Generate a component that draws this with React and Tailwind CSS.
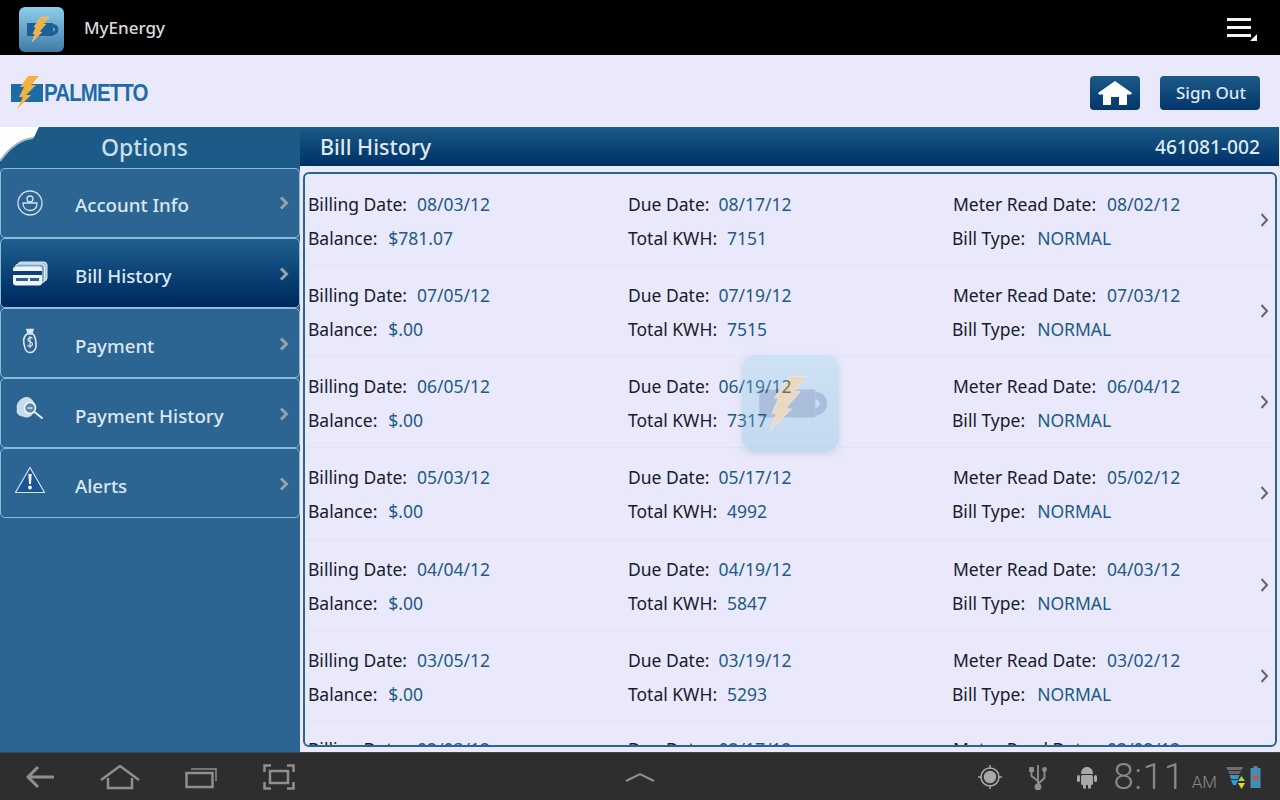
const BILLS = [
  { billing: "08/03/12", due: "08/17/12", read: "08/02/12", balance: "$781.07", kwh: "7151" },
  { billing: "07/05/12", due: "07/19/12", read: "07/03/12", balance: "$.00", kwh: "7515" },
  { billing: "06/05/12", due: "06/19/12", read: "06/04/12", balance: "$.00", kwh: "7317" },
  { billing: "05/03/12", due: "05/17/12", read: "05/02/12", balance: "$.00", kwh: "4992" },
  { billing: "04/04/12", due: "04/19/12", read: "04/03/12", balance: "$.00", kwh: "5847" },
  { billing: "03/05/12", due: "03/19/12", read: "03/02/12", balance: "$.00", kwh: "5293" },
  { billing: "02/03/12", due: "02/17/12", read: "02/02/12", balance: "$.00", kwh: "5120", last: true },
];

function AppIcon({ id = "appbg", top = "#8fcdec", bottom = "#3f7ba6" }) {
  return (
    <svg viewBox="0 0 45 45" className="w-full h-full">
      <defs>
        <linearGradient id={id} x1="0" y1="0" x2="0" y2="1">
          <stop offset="0" stopColor={top} />
          <stop offset="1" stopColor={bottom} />
        </linearGradient>
      </defs>
      <rect width="45" height="45" rx="6" fill={`url(#${id})`} />
      <rect x="8" y="16" width="26" height="13" fill="#1f5f97" />
      <path d="M34 17 a5.5 5.5 0 0 1 0 11 Z M34 20.5 l0 4 a2 2 0 0 0 0 -4" fill="#1f5f97" fillRule="evenodd" />
      <path d="M22 10 L30 10 L24 17 L27 17 L20 25 L23 25 L13 35 L16 27 L14 27 L17 20 L15 20 Z" fill="#f3b23c" stroke="#fbe3a8" strokeWidth="0.4" />
    </svg>
  );
}

function UserIcon() {
  return (
    <svg width="26" height="26" viewBox="0 0 26 26" fill="none" stroke="#cfe3f1" strokeWidth="1.3">
      <circle cx="13" cy="13" r="12" />
      <circle cx="13" cy="9" r="3" />
      <path d="M6 13 H20 C20 18 17 20.5 13 20.5 C9 20.5 6 18 6 13 Z" />
    </svg>
  );
}

function CardsIcon() {
  return (
    <svg width="36" height="26" viewBox="0 0 36 26">
      <rect x="6" y="1" width="29" height="19" rx="3" fill="#a9c6de" stroke="#dfeaf3" />
      <rect x="3.5" y="3" width="29" height="19" rx="3" fill="#7fa6c6" stroke="#e6eff6" />
      <rect x="1" y="5.5" width="29" height="19" rx="3" fill="#eef4f9" />
      <rect x="1" y="10" width="29" height="4" fill="#0f3f73" />
      <rect x="4" y="17" width="12" height="3" fill="#2f5f8c" />
      <rect x="18" y="17" width="9" height="3" fill="#2f5f8c" />
    </svg>
  );
}

function MoneyIcon() {
  return (
    <svg width="16" height="26" viewBox="0 0 16 26" fill="none" stroke="#dbe8f2" strokeWidth="1.6">
      <path d="M5 1.5 H11 L10 5 H6 Z" fill="#dbe8f2" />
      <path d="M5 6 C1 9 1 13 2.5 18 C3 22 5 24.5 8 24.5 C12 24.5 14.5 21 14 16 C13.8 11 13 8 11 6 Z" />
      <path d="M10.5 10.5 C9 8.5 5.5 9.5 6 12 C6.5 14 10.5 13.5 10.5 16 C10.5 18.5 6.5 19 5.5 17 M8 8 V20" strokeWidth="1.2" />
    </svg>
  );
}

function HistoryIcon() {
  return (
    <svg width="28" height="26" viewBox="0 0 28 26">
      <path d="M8 1 C12 -0.5 16 2 17 5 C20 7 20 13 17 16 C15 20 10 21 7 19 C3 19 0 16 1.5 12 C0 8 3 3 8 1 Z" fill="#c9dbea" stroke="#f1f6fa" strokeWidth="0.8" />
      <circle cx="14" cy="11" r="5.5" fill="#5a88ad" stroke="#f4f8fb" strokeWidth="1.5" />
      <path d="M11.5 11 H16.5" stroke="#f4f8fb" strokeWidth="1.2" />
      <path d="M18.5 15 L26 21" stroke="#e6eff6" strokeWidth="2" strokeLinecap="round" />
    </svg>
  );
}

function AlertIcon() {
  return (
    <svg width="32" height="28" viewBox="0 0 32 28">
      <path d="M16 1.5 L30.5 26.5 H1.5 Z" fill="#1b5593" stroke="#d3e4f0" strokeWidth="1.2" strokeLinejoin="round" />
      <path d="M14.3 8 H17.7 L17 18 H15 Z" fill="#f2f6fa" />
      <circle cx="16" cy="21.5" r="1.9" fill="#f2f6fa" />
    </svg>
  );
}

const MENU = [
  { label: "Account Info", icon: <UserIcon />, iconBox: "pl-[16px] pt-[21px]", text: "pt-[22px]", chevron: "top-[27px]" },
  { label: "Bill History", icon: <CardsIcon />, iconBox: "pl-[11px] pt-[22px]", active: true, text: "pt-[23px]", chevron: "top-[28px]" },
  { label: "Payment", icon: <MoneyIcon />, iconBox: "pl-[21px] pt-[19px]", text: "pt-[23px]", chevron: "top-[28px]" },
  { label: "Payment History", icon: <HistoryIcon />, iconBox: "pl-[15px] pt-[18px]", text: "pt-[23px]", chevron: "top-[28px]" },
  { label: "Alerts", icon: <AlertIcon />, iconBox: "pl-[13px] pt-[17px]", text: "pt-[23px]", chevron: "top-[28px]" },
];

function MenuItem({ item }) {
  return (
    <div
      className={`relative h-[70px] w-[300px] rounded-[5px] border border-[#8bbcd9] flex ${
        item.active ? "bg-gradient-to-b from-[#20608f] to-[#00275e]" : "bg-[#2c6591]"
      }`}
    >
      <div className={`w-[74px] shrink-0 ${item.iconBox}`}>{item.icon}</div>
      <div className={`text-[18.7px] font-medium leading-[27px] text-[#dbe8f2] ${item.text}`}>{item.label}</div>
      <svg width="10" height="14" viewBox="0 0 10 14" fill="none" className={`absolute right-[10px] ${item.chevron}`}>
        <path d="M2 1.5 L7.5 7 L2 12.5" stroke="#98a1a7" strokeWidth="3" />
      </svg>
    </div>
  );
}

function Field({ label, value, gap = "ml-[10px]", className = "" }) {
  return (
    <div className={`h-[34px] leading-[34px] whitespace-nowrap ${className}`}>
      <span className="text-[#15202b]">{label}:</span>
      <span className={`${gap} text-[#215a85]`}>{value}</span>
    </div>
  );
}

function BillRow({ bill }) {
  return (
    <div className={`relative h-[91.125px] shrink-0 pt-[12px] border-b border-[#e3e3f5] flex text-[17.5px] ${bill.last ? "-mt-[2px]" : ""}`}>
      <div className="w-[323px] pl-[3px] shrink-0">
        <Field label="Billing Date" value={bill.billing} />
        <Field label="Balance" value={bill.balance} gap="ml-[11px]" />
      </div>
      <div className="w-[324px] shrink-0">
        <Field label="Due Date" value={bill.due} gap="ml-[9px]" />
        <Field label="Total KWH" value={bill.kwh} />
      </div>
      <div>
        <Field label="Meter Read Date" value={bill.read} gap="ml-[11px]" className="pl-px" />
        <Field label="Bill Type" value="NORMAL" gap="ml-[12px]" />
      </div>
      <svg width="9" height="14" viewBox="0 0 9 14" fill="none" className="absolute right-[6px] top-[38px]">
        <path d="M1.5 1 L7 7 L1.5 13" stroke="#5d6770" strokeWidth="2" />
      </svg>
    </div>
  );
}

function SystemBar() {
  const c = "#8f8f8f";
  return (
    <div className="h-[48px] shrink-0 bg-[#2e2e2e] border-t border-[#3f4549] flex items-center relative">
      <div className="flex items-center pl-[25px] w-[625px]">
        <svg width="30" height="26" viewBox="0 0 30 26" fill="none" stroke={c} strokeWidth="3">
          <path d="M29 13 H3 M13 3 L3 13 L13 23" />
        </svg>
        <svg width="40" height="26" viewBox="0 0 40 26" fill="none" stroke={c} strokeWidth="2.5" className="ml-[45px]">
          <path d="M1 16 L20 2 L39 16 M8 14 L8 24 H32 V14" />
        </svg>
        <svg width="32" height="24" viewBox="0 0 32 24" fill="none" stroke={c} strokeWidth="2.5" className="ml-[45px]">
          <rect x="1.5" y="8" width="26" height="14" />
          <path d="M6 4 H31 V16" strokeWidth="1.5" />
        </svg>
        <svg width="32" height="26" viewBox="0 0 32 26" fill="none" stroke={c} strokeWidth="2.5" className="ml-[46px]">
          <path d="M1.5 8 V1.5 H8 M24 1.5 H30.5 V8 M1.5 18 V24.5 H8 M24 24.5 H30.5 V18" />
          <rect x="7" y="7" width="18" height="12" />
        </svg>
      </div>
      <svg width="30" height="10" viewBox="0 0 30 10" fill="none" stroke={c} strokeWidth="2">
        <path d="M1 9 L15 2 L29 9" />
      </svg>
      <div className="ml-auto flex items-center">
        <svg width="26" height="26" viewBox="0 0 26 26" fill="none" stroke="#a8a8a8" strokeWidth="1.5">
          <circle cx="13" cy="13" r="5.5" fill="#a8a8a8" />
          <circle cx="13" cy="13" r="9" />
          <path d="M13 1 V5 M13 21 V25 M1 13 H5 M21 13 H25" />
        </svg>
        <svg width="18" height="26" viewBox="0 0 18 26" fill="none" stroke={c} strokeWidth="1.8" className="ml-[26px]">
          <path d="M9 1 V24 M9 17 L2.5 12 V7 M9 20 L15.5 14 V7" />
          <circle cx="9" cy="23" r="2.5" fill={c} />
          <rect x="1" y="4" width="3" height="3" fill={c} />
          <circle cx="15.5" cy="5.5" r="1.5" fill={c} />
        </svg>
        <svg width="22" height="24" viewBox="0 0 22 24" className="ml-[29px]" fill="#a8a8a8">
          <path d="M5 9 C5 4 8 2 11 2 C14 2 17 4 17 9 Z" />
          <rect x="5" y="10" width="12" height="10" rx="1.5" />
          <rect x="1" y="10" width="3" height="7" rx="1.5" />
          <rect x="18" y="10" width="3" height="7" rx="1.5" />
          <rect x="7" y="20" width="3" height="3.5" />
          <rect x="12" y="20" width="3" height="3.5" />
        </svg>
        <div
          className="ml-[15px] text-[37px] leading-none font-light text-[#8a8a8a] tracking-[0.5px]"
          style={{ fontFamily: "Roboto, 'Noto Sans', sans-serif" }}
        >
          8:11
        </div>
        <div
          className="ml-[7px] mt-[12px] text-[17px] leading-none font-light text-[#8a8a8a]"
          style={{ fontFamily: "Roboto, 'Noto Sans', sans-serif" }}
        >
          AM
        </div>
        <svg width="20" height="26" viewBox="0 0 20 26" className="ml-[9px]">
          <path d="M0 3 H17 L15.5 6 H1.5 Z" fill="#6f6f6f" />
          <path d="M2 7 H15 L13.5 10 H3.5 Z" fill="#7a5d5d" />
          <path d="M3.5 11 H13.5 L12 15 H5 Z" fill="#2e9bd6" />
          <path d="M5 16 H12 L10 21 H7 Z" fill="#2e9bd6" />
          <path d="M15.5 12 L19 17 H12 Z" fill="#a6d63a" />
          <path d="M15.5 25 L19 19 H12 Z" fill="#d8d93a" />
        </svg>
        <svg width="11" height="22" viewBox="0 0 11 22" className="ml-[4px] mr-[19px]">
          <rect x="3.5" y="0" width="4" height="2" fill="#777" />
          <rect x="0.5" y="2" width="10" height="20" fill="#3f8fb8" />
          <path d="M3 9 L8 14 M8 9 L3 14" stroke="#c9504a" strokeWidth="2" />
        </svg>
      </div>
    </div>
  );
}

export default function App() {
  return (
    <div
      className="w-[1280px] h-[800px] overflow-hidden flex flex-col bg-[#e9e9fb]"
      style={{ fontFamily: "'Noto Sans', 'Open Sans', sans-serif" }}
    >
      <header className="h-[55px] shrink-0 bg-black flex items-center pl-[19px] pr-[23px] pt-[4px]">
        <div className="w-[45px] h-[45px]">
          <AppIcon />
        </div>
        <span className="ml-[20px] -mt-[4px] text-[17px] font-medium text-[#dcdcdc]">MyEnergy</span>
        <svg width="30" height="25" viewBox="0 0 30 25" className="ml-auto" fill="#f2f2f2">
          <rect x="0" y="1" width="24" height="3" />
          <rect x="0" y="9" width="24" height="3" />
          <rect x="0" y="17" width="24" height="3" />
          <path d="M30 17 V24 H23 Z" />
        </svg>
      </header>

      <div className="h-[72px] shrink-0 flex items-center pl-[11px] pr-[20px] pt-[4px]">
        <div className="flex items-center relative">
          <svg width="32" height="34" viewBox="0 0 32 34" className="shrink-0">
            <rect x="0" y="8" width="32" height="18" fill="#1d6ca8" />
            <path d="M17 0 L28 0 L20 9 L25 9 L15 19 L20 19 L6 33 L12 21 L8 21 L13 11 L9 11 Z" fill="#f3b23c" />
          </svg>
          <span
            className="ml-[1px] inline-block origin-left scale-x-[0.89] text-[23px] leading-none font-bold text-[#1d6ca8] tracking-[-1px]"
            style={{ fontFamily: "'Liberation Sans', sans-serif" }}
          >
            PALMETTO
          </span>
        </div>
        <button className="ml-auto w-[50px] h-[34px] rounded-[4px] bg-gradient-to-b from-[#1c5a87] to-[#05366c] flex items-center justify-center">
          <svg width="34" height="24" viewBox="0 0 34 24" fill="#ffffff">
            <path d="M17 0 L34 12 L33 13.5 H29 V24 H21 V16 H13 V24 H5 V13.5 H1 L0 12 Z" />
          </svg>
        </button>
        <button className="ml-[20px] w-[100px] h-[34px] pl-[2px] rounded-[4px] bg-gradient-to-b from-[#1c5a87] to-[#05366c] text-[17px] font-medium text-[#dbe8f2]">
          Sign Out
        </button>
      </div>

      <div className="flex-1 min-h-0 flex">
        <aside className="relative w-[300px] shrink-0 bg-[#2c6591] flex flex-col">
          <div className="h-[41px] shrink-0 bg-[#1c5a87] pl-[101px] text-[23px] leading-[41px] font-medium text-[#c9deec]">Options</div>
          <svg width="42" height="38" viewBox="0 0 42 38" className="absolute left-0 top-0">
            <path d="M0 0 H39 C36 5 35 10 33 11 C22 12 10 20 0 34 Z" fill="#ffffff" />
            <path d="M33 11 C22 12 10 20 0 34" fill="none" stroke="#a4b6c4" strokeWidth="2" />
          </svg>
          {MENU.map((item) => (
            <MenuItem key={item.label} item={item} />
          ))}
        </aside>

        <main className="relative flex-1 min-w-0 flex flex-col">
          <div className="h-[39px] mr-px shrink-0 bg-gradient-to-b from-[#1c5a87] to-[#003166] flex items-center justify-between pl-[20px] pr-[19px]">
            <span className="text-[21.5px] font-medium text-[#dfe9f1] mt-[2px]">Bill History</span>
            <span className="text-[19.2px] font-medium text-[#dfe9f1] mt-px">461081-002</span>
          </div>
          <div className="flex-1 min-h-0 mx-[3px] mt-[6px] mb-[5px] rounded-[6px] border-2 border-[#2c6591] pt-px overflow-hidden flex flex-col">
            {BILLS.map((bill) => (
              <BillRow key={bill.billing} bill={bill} />
            ))}
          </div>
          <div className="absolute left-[442px] top-[228px] w-[97px] h-[97px] opacity-30 rounded-[10px] shadow-[0_2px_6px_rgba(60,100,150,0.5)]">
            <AppIcon id="watermarkbg" top="#92d2e9" bottom="#71b7d5" />
          </div>
        </main>
      </div>

      <SystemBar />
    </div>
  );
}
